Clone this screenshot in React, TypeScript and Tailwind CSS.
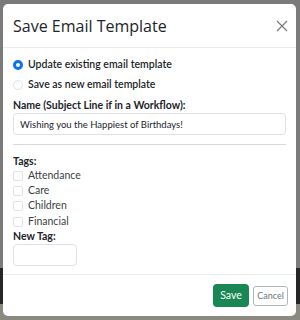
import { useState } from "react";

const tags = ["Attendance", "Care", "Children", "Financial"];

export default function App() {
    const [mode, setMode] = useState<"update" | "new">("update");
    const [name, setName] = useState("Wishing you the Happiest of Birthdays!");
    const [checked, setChecked] = useState<string[]>([]);
    const [newTag, setNewTag] = useState("");

    const toggle = (t: string) =>
        setChecked((c) => (c.includes(t) ? c.filter((x) => x !== t) : [...c, t]));

    return (
        <div
            className="w-[300px] h-[320px] pt-[4px] pl-[3px] overflow-hidden bg-[linear-gradient(to_bottom,#7b7b7b_0,#7b7b7b_268px,#262626_268px,#262626_304px,#8a8a80_304px)]"
            style={{ fontFamily: 'Lato, "Open Sans", sans-serif' }}
        >
            <div className="w-[293px] h-[312px] bg-white rounded-[5px] flex flex-col text-[#212529]">
                {/* Header */}
                <div className="h-[44px] flex items-center justify-between pl-[10px] pr-[8px] border-b border-[#e9ecef]">
                    <h5
                        className="text-[16px] font-medium leading-none"
                        style={{ fontFamily: '"Open Sans", sans-serif' }}
                    >
                        Save Email Template
                    </h5>
                    <button className="w-[12px] h-[12px] text-[#7a7a7a]">
                        <svg viewBox="0 0 12 12" className="w-[12px] h-[12px]">
                            <path d="M1 1 L11 11 M11 1 L1 11" stroke="currentColor" strokeWidth="1.2" />
                        </svg>
                    </button>
                </div>

                {/* Body */}
                <div className="flex-1 px-[10px] pt-[7px] text-[10.5px]">
                    <label className="flex items-center gap-[5px] h-[20px] font-semibold">
                        <input
                            type="radio"
                            checked={mode === "update"}
                            onChange={() => setMode("update")}
                            className="appearance-none w-[10px] h-[10px] rounded-full border border-[#ced4da] checked:border-[3px] checked:border-[#0d6efd] bg-white"
                        />
                        Update existing email template
                    </label>
                    <label className="flex items-center gap-[5px] h-[20px] font-semibold">
                        <input
                            type="radio"
                            checked={mode === "new"}
                            onChange={() => setMode("new")}
                            className="appearance-none w-[10px] h-[10px] rounded-full border border-[#dee2e6] checked:border-[3px] checked:border-[#0d6efd] bg-white"
                        />
                        Save as new email template
                    </label>

                    <div className="font-bold mt-[3px] leading-[15px]">Name (Subject Line if in a Workflow):</div>
                    <input
                        value={name}
                        onChange={(e) => setName(e.target.value)}
                        className="w-full h-[22px] border border-[#dee2e6] rounded-[4px] px-[6px] text-[9.5px] outline-none"
                    />

                    <hr className="border-t border-[#d9d9d9] mt-[9px] mb-[10px]" />

                    <div className="font-bold leading-[13px]">Tags:</div>
                    {tags.map((t) => (
                        <label key={t} className="flex items-center gap-[5px] h-[15.3px] text-[#3a3f44]">
                            <input
                                type="checkbox"
                                checked={checked.includes(t)}
                                onChange={() => toggle(t)}
                                className="appearance-none w-[10px] h-[10px] rounded-[2px] border border-[#dee2e6] checked:bg-[#0d6efd]"
                            />
                            {t}
                        </label>
                    ))}
                    <div className="font-bold leading-[15px]">New Tag:</div>
                    <input
                        value={newTag}
                        onChange={(e) => setNewTag(e.target.value)}
                        className="w-[64px] h-[22px] border border-[#dee2e6] rounded-[4px] px-[6px] text-[9.5px] outline-none"
                    />
                </div>

                {/* Footer */}
                <div className="h-[42px] border-t border-[#e9ecef] flex items-center justify-end gap-[4px] pr-[8px]">
                    <button className="h-[23px] w-[36px] bg-[#198754] text-white rounded-[4px] text-[10.5px]">
                        Save
                    </button>
                    <button className="h-[20px] w-[35px] border border-[#adb5bd] text-[#6c757d] rounded-[3px] text-[9px]">
                        Cancel
                    </button>
                </div>
            </div>
        </div>
    );
}
